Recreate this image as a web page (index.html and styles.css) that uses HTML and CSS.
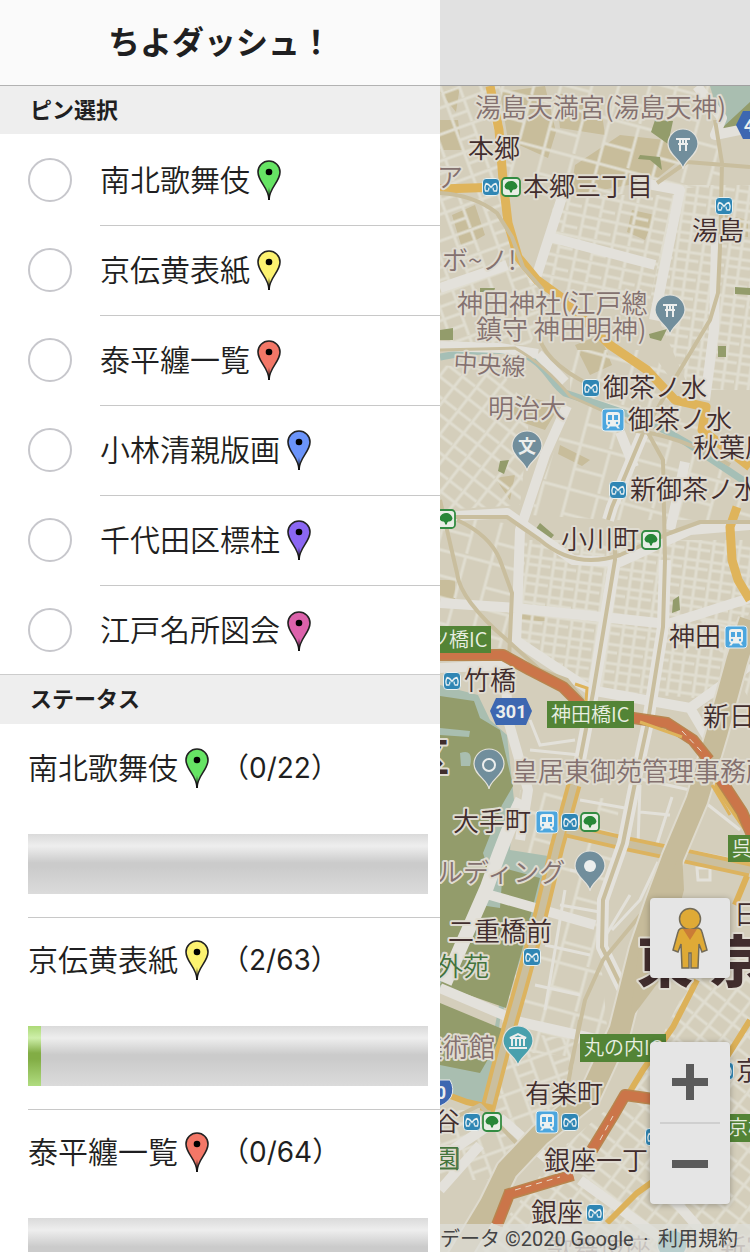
FILE: index.html
```html
<!DOCTYPE html>
<html lang="ja">
<head>
<meta charset="utf-8">
<meta name="viewport" content="width=device-width, initial-scale=1">
<title>ちよダッシュ！</title>
<link rel="stylesheet" href="styles.css">
</head>
<body>
<svg class="defs" aria-hidden="true">
  <symbol id="pin" viewBox="0 0 24 40">
    <path d="M12 39.500C11.500 27 1 22 1 12A11 11 0 0 1 23 12C23 22 12.500 27 12 39.500Z" fill="currentColor" stroke="#222" stroke-width="1.600"/>
    <path d="M12 27L11 40H13Z" fill="#111"/>
    <circle cx="12" cy="12" r="3.300" fill="#000"/>
  </symbol>
  <symbol id="metro" viewBox="0 0 18 18">
    <rect x=".5" y=".5" width="17" height="17" rx="3.500" fill="#2f86b4" stroke="#e9f0ef"/>
    <path d="M4.500 5Q2 8.500 3.500 13H6.500M13.500 5Q16 8.500 14.500 13H11.500M4 5.500Q7 6 9 9.500Q11 6 14 5.500M6.500 12.500L7 9.500M11.500 12.500L11 9.500" fill="none" stroke="#e8f0f2" stroke-width="1.300"/>
  </symbol>
  <symbol id="toei" viewBox="0 0 20 20">
    <rect x="1" y="1" width="18" height="18" rx="3.500" fill="#e8eee5" stroke="#338c42" stroke-width="1.800"/>
    <path d="M10 4C13 4 16 6 16.500 9.500Q15.500 13 12.500 12.500Q11 13 10.800 15.500H9.200Q9 13 7.500 12.500Q4.500 13 3.500 9.500C4 6 7 4 10 4Z" fill="#278737"/>
  </symbol>
  <symbol id="jr" viewBox="0 0 24 24">
    <rect x="1" y="1" width="22" height="22" rx="3" fill="#4ba6de" stroke="#e4eef2"/>
    <path d="M8 4H16Q19 4 19 7V15Q19 17 17 18L19 20.500H16.500L15 18.500H9L7.500 20.500H5L7 18Q5 17 5 15V7Q5 4 8 4Z" fill="#edf1f0"/>
    <path d="M7 7H11V12H7ZM13 7H17V12H13Z" fill="#4ba6de"/>
    <circle cx="8" cy="15" r="1.200" fill="#4ba6de"/><circle cx="16" cy="15" r="1.200" fill="#4ba6de"/>
  </symbol>
  <symbol id="place" viewBox="0 0 32 42">
    <path d="M16 41C15 32 1 27 1 16A15 15 0 0 1 31 16C31 27 17 32 16 41Z" fill="currentColor" stroke="#e4e2db" stroke-width="1.200"/>
  </symbol>
</svg>

<aside class="drawer">
  <header class="bar"><h1 class="bar-title">ちよダッシュ！</h1></header>
  <h2 class="section">ピン選択</h2>
  <ul class="list">
    <li class="choice"><input class="check" type="checkbox" id="p1"><label class="choice-label" for="p1">南北歌舞伎<svg class="pin green"><use href="#pin"/></svg></label></li>
    <li class="choice"><input class="check" type="checkbox" id="p2"><label class="choice-label" for="p2">京伝黄表紙<svg class="pin yellow"><use href="#pin"/></svg></label></li>
    <li class="choice"><input class="check" type="checkbox" id="p3"><label class="choice-label" for="p3">泰平纏一覧<svg class="pin red"><use href="#pin"/></svg></label></li>
    <li class="choice"><input class="check" type="checkbox" id="p4"><label class="choice-label" for="p4">小林清親版画<svg class="pin blue"><use href="#pin"/></svg></label></li>
    <li class="choice"><input class="check" type="checkbox" id="p5"><label class="choice-label" for="p5">千代田区標柱<svg class="pin purple"><use href="#pin"/></svg></label></li>
    <li class="choice"><input class="check" type="checkbox" id="p6"><label class="choice-label" for="p6">江戸名所図会<svg class="pin pink"><use href="#pin"/></svg></label></li>
  </ul>
  <h2 class="section section-ruled">ステータス</h2>
  <ul class="list">
    <li class="status"><p class="status-name">南北歌舞伎<svg class="pin green"><use href="#pin"/></svg><span class="count">（0/22）</span></p><div class="meter" role="progressbar" aria-label="南北歌舞伎" aria-valuemin="0" aria-valuemax="22" aria-valuenow="0"></div></li>
    <li class="status"><p class="status-name">京伝黄表紙<svg class="pin yellow"><use href="#pin"/></svg><span class="count">（2/63）</span></p><div class="meter" role="progressbar" aria-label="京伝黄表紙" aria-valuemin="0" aria-valuemax="63" aria-valuenow="2"><div class="meter-fill" style="width:3.200%"></div></div></li>
    <li class="status"><p class="status-name">泰平纏一覧<svg class="pin red"><use href="#pin"/></svg><span class="count">（0/64）</span></p><div class="meter" role="progressbar" aria-label="泰平纏一覧" aria-valuemin="0" aria-valuemax="64" aria-valuenow="0"></div></li>
  </ul>
</aside>

<main class="page">
  <div class="bar bar-dim"></div>
  <div class="map">
    <svg class="map-canvas" viewBox="440 86 310 1166" preserveAspectRatio="xMinYMin slice" role="img" aria-label="地図">
      <defs>
        <pattern id="g1" width="34" height="22" patternUnits="userSpaceOnUse" patternTransform="rotate(12)"><path d="M0 2H34M4 0V22M20 2V22M4 12H20M20 15H34" class="st"/></pattern>
        <pattern id="g2" width="26" height="19" patternUnits="userSpaceOnUse" patternTransform="rotate(8)"><path d="M0 2H26M3 0V19M15 0V19M3 10H26" class="st"/></pattern>
        <pattern id="g3" width="56" height="46" patternUnits="userSpaceOnUse" patternTransform="rotate(15)"><path d="M0 3H56M4 0V46M34 3V46M4 28H34" class="st"/></pattern>
        <pattern id="g4" width="30" height="18" patternUnits="userSpaceOnUse" patternTransform="rotate(-52)"><path d="M0 2H30M4 0V18M18 2V18" class="st"/></pattern>
        <pattern id="g5" width="38" height="25" patternUnits="userSpaceOnUse" patternTransform="rotate(-20)"><path d="M0 2H38M4 0V25M22 2V25M4 14H22" class="st"/></pattern>
      </defs>
      <path d="M440 86H750V1252H440Z" fill="#d4cebb"/>
      <g fill="#c8bd9b">
        <path d="M500 92L545 86L556 132L548 158L508 140ZM556 93L600 100L605 135L560 128ZM440 120H458L462 150H440ZM620 135L665 140L680 160L655 180L570 196L575 165ZM632 210L655 215L645 240L627 232ZM452 215L475 205L485 235L462 248ZM440 92L460 86L456 112ZM575 345L600 335L612 365L590 375ZM560 445L590 460L582 466L558 454ZM520 395L560 405L545 430L510 418ZM495 478L515 475L510 500ZM440 580H455V600H440ZM520 612L545 612V621H520ZM725 215L748 220V237L724 236Z"/>
      </g>
      <path d="M440 86H500L510 240L550 300L530 345H440Z" fill="url(#g5)"/>
      <path d="M500 86H720V185L560 200L505 185Z" fill="url(#g3)"/>
      <path d="M556 195L675 195L650 300L560 290L535 280Z" fill="url(#g1)"/>
      <path d="M675 185H750V390H690L650 300Z" fill="url(#g2)"/>
      <path d="M440 365L500 370L530 410L520 505L440 510Z" fill="url(#g4)"/>
      <path d="M570 350H650L750 490V520H610L530 515L570 410Z" fill="url(#g3)"/>
      <path d="M440 515L520 525L515 650L440 640Z" fill="url(#g3)"/>
      <path d="M518 540H750V610L720 700L595 690L518 640Z" fill="url(#g2)"/>
      <path d="M700 620H750V700ZM520 790L620 800L600 950L610 1060L500 1050Z" fill="url(#g3)"/>
      <path d="M690 980L750 930V1252H480L560 1150L640 1080Z" fill="url(#g4)"/>
      <path d="M500 1030L580 1040L560 1120L490 1180H440V1110L490 1110Z" fill="url(#g5)"/>

      <!-- moats and parks -->
      <g fill="#a9beb0">
        <path d="M710 86H750V112L735 135L722 128Z"/>
        <path d="M440 685L478 695L490 720L507 735L514 800L510 850L548 856L540 900L500 1020L490 1110L440 1095V1040L490 1052L500 1000L475 900L440 990Z"/>
      </g>
      <path d="M440 357Q490 347 517 352C545 360 550 383 565 393L607 407Q650 420 687 443L750 485" class="river"/>
      <g fill="#939c6b">
        <path d="M440 696L474 701L480 718L500 730L513 786L502 805L483 853L493 885L478 910L440 975Z"/>
        <path d="M503 868L540 878L522 950L506 1008L440 985L480 905L500 908Z"/>
        <path d="M440 1003L505 1030L480 1073L440 1065Z"/>
        <path d="M655 120L673 121L668 144L651 132ZM640 155L660 157L662 170L650 160L638 159ZM440 330L453 328V340H440ZM649 334L667 329L661 341L650 338ZM718 346H726V357H718ZM500 461L509 460L504 474L498 471ZM540 523L554 535L549 541L535 530ZM673 600L679 596L680 610L672 613ZM480 288H495L494 292H480ZM735 287L750 288V295L735 294ZM722 128L750 102V126L725 133Z"/>
      </g>
      <path d="M440 728L470 731L469 737L440 735ZM460 753Q474 748 470 766L461 766Z" fill="#a9beb0"/>

      <!-- main streets -->
      <g class="road">
        <path d="M563 194L534 284M550 237L655 265M637 182L680 190L654 320M440 288L507 265M440 346L500 348L538 354M538 354L565 382M697 86L722 118L715 135L750 128M716 240L714 330L705 400"/>
        <path d="M567 406L545 455L520 530L516 645M440 603L516 608L668 624L750 598M620 432L634 467M515 640L590 690L690 708L750 665M690 708L712 745M685 462L670 530M440 668L505 665L508 720L528 790L520 840"/>
        <path d="M440 517L507 513L573 560L620 562L690 530L750 525"/>
        <path d="M522 800Q509 825 487 887L445 983" stroke-width="14"/>
        <path d="M490 895L595 925M440 988L520 1022L600 1040M440 1158L500 1118M500 1118L560 1170M440 1190L480 1145M580 1180L680 1252M550 1220L600 1252M665 1190L720 1252"/>
      </g>
      <path class="lane" d="M672 797L655 850M600 770L690 790M580 800L625 808M640 785L638 845M640 812L670 815M700 795L685 850L745 862M702 800L740 830M697 868H710V880H698ZM658 862L640 900L612 930M630 895L600 945M610 960L622 990L610 1060M570 870L595 875M560 905L600 912M545 945L590 955M535 985L580 995M565 890L545 1010M530 750L580 755M530 720L540 745L575 740"/>

      <!-- arterial roads -->
      <g class="amber">
        <path d="M490 86L499 130L503 180L508 223L518 257L537 280L562 298L610 345L647 370L675 400L706 407L702 430L750 467M440 189L502 187M737 507L730 527L732 560L738 580L750 600"/>
      </g>
      <g class="amber-case"><path d="M574 785L557 847L540 917L520 990L503 1050L487 1112M567 830L623 843L690 857L750 870"/></g>
      <g class="amber-core"><path d="M574 785L557 847L540 917L520 990L503 1050L487 1112M567 830L623 843L690 857L750 870"/></g>
      <path d="M440 1092L467 1102L493 1108M747 876L735 905M697 980L673 1027L643 1070L623 1103M700 1140L673 1167L637 1193L607 1223M712 780L747 830M750 1020L725 1060" fill="none" stroke="#dcb159" stroke-width="6"/>

      <!-- railways -->
      <g class="rail-case">
        <path d="M615 560L603 633L593 693L580 760M665 560L663 627L647 727L637 773L623 843L603 900L602 947L623 990L622 1030M643 433L612 507L608 520"/>
      </g>
      <g class="rail">
        <path d="M440 193Q474 195 497 213L512 237L523 267L543 290M657 183L687 162L750 167M715 120L722 163L720 247L718 293L710 320L680 370L643 433L612 507L608 520M648 433L663 460L665 560L663 627L647 727L637 773L623 843L603 900L602 947L623 990L622 1030M440 517L507 517L540 540Q575 570 620 555L670 533L700 522H750M440 500L457 573Q460 600 507 640L540 670L567 680L583 700M457 520Q490 535 500 560L512 593L509 660M615 540V560L603 633L593 693L580 760M538 330Q540 360 590 385M630 430Q680 435 730 465M657 895L603 960L585 1000L570 1070M580 1020L565 1100M440 1125L480 1105L525 1152"/>
      </g>
      <path d="M440 350L515 348Q545 365 570 396L645 430" fill="none" stroke="#c9be9e" stroke-width="3"/>
      <path class="trunk-case" d="M750 620L737 660L717 733L697 800L673 857L657 900L640 950L620 1030L590 1095L540 1135L507 1170L490 1205L457 1260"/>
      <path class="trunk" d="M750 620L737 660L717 733L697 800L673 857L657 900L640 950L620 1030L590 1095L540 1135L507 1170L490 1205L457 1260"/>
      <path d="M682 850L684 890L660 980L630 1020L640 940Z" fill="#c6bb9a"/>

      <!-- expressways -->
      <g class="express-case"><path d="M440 655L503 655L530 670L563 687L584 708M620 716L667 723L693 740L709 760M721 780L742 812L752 835M506 1195L573 1175M510 1192L497 1225M592 1150L614 1114L625 1095L660 1100"/></g>
      <g class="express"><path d="M440 655L503 655L530 670L563 687L584 708M620 716L667 723L693 740L709 760M721 780L742 812L752 835M506 1195L573 1175M510 1192L497 1225M592 1150L614 1114L625 1095L660 1100"/></g>
      <path d="M640 722L682 737M575 684L587 688L586 702M712 785L730 815" fill="none" stroke="#deb35a" stroke-width="3"/>
      <path d="M682 731L702 752M515 1190L560 1177M600 1140L613 1116" fill="none" stroke="#e9dccb" stroke-dasharray="6 5"/>

      <!-- station and place markers -->
      <g>
        <use href="#metro" x="482" y="178" width="18" height="18"/><use href="#toei" x="501" y="177" width="20" height="20"/>
        <use href="#metro" x="715" y="197" width="18" height="18"/>
        <use href="#metro" x="582" y="379" width="18" height="18"/><use href="#jr" x="601" y="408" width="24" height="24"/>
        <use href="#metro" x="609" y="481" width="18" height="18"/><use href="#toei" x="641" y="530" width="20" height="20"/>
        <use href="#toei" x="436" y="509" width="20" height="20"/><use href="#jr" x="724" y="625" width="24" height="24"/>
        <use href="#metro" x="443" y="672" width="18" height="18"/>
        <use href="#jr" x="535" y="810" width="24" height="24"/><use href="#metro" x="561" y="813" width="18" height="18"/><use href="#toei" x="580" y="812" width="20" height="20"/>
        <use href="#metro" x="523" y="948" width="18" height="18"/>
        <use href="#metro" x="463" y="1113" width="18" height="18"/><use href="#toei" x="482" y="1112" width="20" height="20"/>
        <use href="#jr" x="535" y="1110" width="24" height="24"/><use href="#metro" x="561" y="1113" width="18" height="18"/>
        <use href="#metro" x="586" y="1204" width="18" height="18"/><use href="#metro" x="645" y="1128" width="18" height="18"/><use href="#metro" x="716" y="1062" width="18" height="18"/>
      </g>
      <g color="#718e9c">
        <use href="#place" x="667" y="128" width="32" height="42"/><use href="#place" x="654" y="294" width="32" height="42"/>
        <use href="#place" x="511" y="430" width="32" height="42"/><use href="#place" x="473" y="748" width="32" height="42"/>
        <use href="#place" x="574" y="850" width="32" height="42"/>
      </g>
      <g color="#48a0ad"><use href="#place" x="502" y="1025" width="32" height="42"/><use href="#place" x="656" y="1229" width="32" height="42"/></g>
      <g fill="none" stroke="#eceeed" stroke-width="2">
        <path d="M676 139H690M678 144H688M680 139V151M686 139V151M683 139V144M663 305H677M665 310H675M667 305V317M673 305V317M670 305V310"/>
        <circle cx="489" cy="765" r="6"/>
        <path d="M510 1038L518 1034L526 1038ZM509 1048H527M512 1039V1046M516 1039V1046M520 1039V1046M524 1039V1046"/>
      </g>
      <circle cx="590" cy="866" r="6" fill="#eceeed"/>
      <text x="518" y="453" class="glyph">文</text>

      <!-- road signs -->
      <path d="M496 698H526L532 711L526 725H496L490 711Z" fill="#3d67b1"/><text x="511" y="718" class="shield">301</text>
      <path d="M743 111H760V139H743L736 125Z" fill="#3d67b1"/><text x="749" y="132" class="shield">4</text>
      <path d="M432 1080H450Q455 1089 451 1097Q446 1105 436 1107Z" fill="#3d67b1" stroke="#e6e8e8"/><text x="441" y="1099" class="shield">0</text>
      <g fill="#538436"><path d="M440 626H491V653H440ZM547 701H634V728H547ZM580 1034H666V1062H580ZM728 835H760V862H728ZM728 1114H760V1142H728Z"/></g>
      <g class="sign"><text x="429" y="647">ツ橋IC</text><text x="551" y="722">神田橋IC</text><text x="584" y="1055">丸の内IC</text><text x="732" y="856">呉</text><text x="728" y="1135">京橋</text></g>

      <g class="poi">
        <text x="475" y="117">湯島天満宮(湯島天神)</text><text x="437" y="187">ア</text><text x="442" y="270">ボ~ノ!</text>
        <text x="457" y="313">神田神社(江戸總</text><text x="476" y="339">鎮守 神田明神)</text>
        <text x="453" y="371" class="line" transform="rotate(4 453 371)">中央線</text>
        <text x="488" y="418">明治大</text><text x="512" y="781">皇居東御苑管理事務所</text><text x="437" y="882">ルディング</text>
        <text x="417" y="1057">美術館</text><text x="547" y="1258">歌舞伎座</text><text x="720" y="1258">新富</text>
      </g>
      <g class="station">
        <text x="468" y="158">本郷</text><text x="523" y="196">本郷三丁目</text><text x="692" y="240">湯島</text>
        <text x="603" y="397">御茶ノ水</text><text x="628" y="429">御茶ノ水</text><text x="693" y="457">秋葉原</text><text x="630" y="499">新御茶ノ水</text>
        <text x="561" y="549">小川町</text><text x="669" y="646">神田</text><text x="464" y="690">竹橋</text><text x="703" y="726">新日本橋</text>
        <text x="453" y="831">大手町</text><text x="448" y="941">二重橋前</text><text x="734" y="924">日</text>
        <text x="525" y="1103">有楽町</text><text x="434" y="1131">谷</text><text x="544" y="1170">銀座一丁目</text><text x="531" y="1222">銀座</text><text x="736" y="1080">京橋</text>
      </g>
      <g class="park"><text x="437" y="976">外苑</text><text x="434" y="1168">園</text></g>
      <path d="M440 1148H458V1169H440" fill="none" stroke="#44743d"/>
      <text x="409" y="772" class="ward">区</text>
      <text x="637" y="982" class="city">東</text><text x="710" y="982" class="city">京</text>
    </svg>

    <div class="controls">
      <button class="control" type="button" aria-label="ストリートビュー">
        <svg class="pegman" viewBox="0 0 36 62">
          <path d="M11 21H25Q29 21 30 25L35 43L30 45L27 37L26 61H19V46H17V61H10L9 37L6 45L1 43L6 25Q7 21 11 21Z" fill="#dfaa36" stroke="#736b58" stroke-width="1.500"/>
          <circle cx="18" cy="12" r="10.500" fill="#dfaa36" stroke="#736b58" stroke-width="1.500"/>
          <path d="M11 22H25L18 33Z" fill="#ca7c36"/>
        </svg>
      </button>
      <div class="zoom">
        <button class="control-zoom" type="button" aria-label="拡大"><svg class="sign-icon" viewBox="0 0 36 36"><path d="M14 0H22V14H36V22H22V36H14V22H0V14H14Z" fill="#5b5b5b"/></svg></button>
        <hr class="zoom-rule">
        <button class="control-zoom" type="button" aria-label="縮小"><svg class="sign-icon" viewBox="0 0 36 36"><path d="M0 14H36V22H0Z" fill="#5b5b5b"/></svg></button>
      </div>
    </div>
    <footer class="credits"><span>データ ©2020 Google</span><span>·</span><a class="terms" href="#terms">利用規約</a></footer>
  </div>
</main>
</body>
</html>
```
FILE: styles.css
```css
* { box-sizing: border-box; }

body {
  margin: 0;
  height: 100vh;
  display: flex;
  overflow: hidden;
  background: #fff;
  color: #1f1f21;
  font-family: Inter, "Noto Sans CJK JP", sans-serif;
  font-size: 30px;
}

.defs { position: absolute; width: 0; height: 0; }

.drawer {
  flex: 0 0 440px;
  height: 100vh;
  overflow: hidden;
  background: #fff;
}

.bar {
  height: 86px;
  display: flex;
  align-items: center;
  justify-content: center;
  background: #fafafa;
  border-bottom: 1px solid #b2b2b2;
}
.bar-dim { background: #e1e1e1; border-color: #a0a0a0; }
.bar-title { margin: 0; font-size: 32px; line-height: 48px; font-weight: 700; }

.section {
  margin: 0;
  padding: 0 30px;
  background: #eee;
  font-size: 22px;
  line-height: 48px;
  font-weight: 700;
}
.section-ruled { border-top: 1px solid #ccc; line-height: 49px; }

.list { list-style: none; margin: 0; padding: 0; font-weight: 350; }

.choice {
  display: flex;
  padding-left: 28px;
  gap: 28px;
}
.choice:first-child { padding-top: 2px; }
.check {
  appearance: none;
  flex: none;
  align-self: center;
  width: 44px;
  height: 44px;
  margin: 0 0 2px;
  border: 2px solid #c7c7cc;
  border-radius: 50%;
}
.choice:last-child .check { margin: 0; }
.check:checked { background: #0076ff; border-color: #0076ff; }
.choice-label {
  flex: 1;
  height: 90px;
  display: flex;
  align-items: center;
  border-bottom: 1px solid #c8c8c8;
  padding-bottom: 6px;
}
.choice:last-child .choice-label { height: 88px; border-bottom: 0; padding-bottom: 4px; }

.pin { flex: none; width: 24px; height: 40px; margin: 5px 8px 0 7px; }
.green { color: #66e464; }
.yellow { color: #fcf270; }
.red { color: #f37767; }
.blue { color: #6b94fa; }
.purple { color: #8b67f3; }
.pink { color: #dc62ab; }

.status {
  margin-left: 28px;
  padding: 20px 12px 23px 0;
  border-bottom: 1px solid #c8c8c8;
}
.status:first-child { padding-top: 22px; }
.status-name {
  height: 44px;
  margin: 0 0 44px;
  padding-bottom: 4px;
  display: flex;
  align-items: center;
}
.status-name .pin { margin-top: 3px; }
.count { margin-left: 4px; font-size: 28px; font-weight: 400; }

.meter {
  height: 60px;
  background: linear-gradient(#dadada, #eee 20%, #cbcbcb 48%, #cbcbcb 55%, #dbdbdb);
}
.meter-fill {
  height: 100%;
  background: linear-gradient(#acd977, #ceefaa 20%, #82ad45 45%, #82ad45 55%, #b0dc80);
}

.page { flex: 1; min-width: 0; display: flex; flex-direction: column; }
.map { position: relative; flex: 1; min-height: 0; overflow: hidden; }
.map-canvas {
  display: block;
  width: 100%;
  height: 100%;
  font-family: "Noto Sans CJK JP", sans-serif;
  font-weight: 350;
}

.st { fill: none; stroke: #e0ddd0; stroke-width: 3px; }
.lane { fill: none; stroke: #e3e1da; stroke-width: 3px; }
.road { fill: none; stroke: #e3e1db; stroke-width: 10px; stroke-linejoin: round; }
.river { fill: none; stroke: #a5bfb6; stroke-width: 7px; }
.amber { fill: none; stroke: #dfb45b; stroke-width: 9px; stroke-linejoin: round; }
.amber-case { fill: none; stroke: #dcb35f; stroke-width: 15px; }
.amber-core { fill: none; stroke: #cabf9f; stroke-width: 7px; }
.rail-case { fill: none; stroke: #e4e2dc; stroke-width: 12px; stroke-linejoin: round; }
.rail { fill: none; stroke: #c9be9e; stroke-width: 4px; stroke-linejoin: round; }
.trunk-case { fill: none; stroke: #dedacd; stroke-width: 25px; stroke-linejoin: round; }
.trunk { fill: none; stroke: #c6bb9a; stroke-width: 21px; stroke-linejoin: round; }
.express-case { fill: none; stroke: #b9854e; stroke-width: 12px; stroke-linejoin: round; }
.express { fill: none; stroke: #cb7549; stroke-width: 9px; stroke-linejoin: round; }

.poi, .station, .park, .ward, .city {
  paint-order: stroke;
  stroke: #dfdbd0;
  stroke-width: 4px;
  stroke-linejoin: round;
  font-size: 26px;
}
.poi { fill: #84716f; }
.station { fill: #412d2d; }
.park { fill: #44743d; }
.line { font-size: 24px; }
.ward { font-size: 40px; font-weight: 700; fill: #412d2d; }
.city { font-size: 56px; font-weight: 900; fill: #412d2d; }
.sign { fill: #e8efe2; font-size: 20px; }
.glyph { fill: #eceeed; font-size: 18px; font-weight: 700; }
.shield { fill: #eceeed; font-family: Roboto, sans-serif; font-size: 18px; font-weight: 700; text-anchor: middle; }

.controls {
  position: absolute;
  right: 20px;
  bottom: 48px;
  display: flex;
  flex-direction: column;
  gap: 64px;
}
.control, .zoom {
  width: 80px;
  border: 0;
  border-radius: 4px;
  background: #e5e5e5;
  box-shadow: 0 1px 6px rgba(0, 0, 0, .3);
}
.control { height: 80px; display: grid; place-items: center; padding: 0; }
.pegman { width: 36px; height: 62px; }
.control-zoom {
  width: 80px;
  height: 80px;
  padding: 0;
  border: 0;
  background: none;
  display: grid;
  place-items: center;
}
.sign-icon { width: 36px; height: 36px; }
.zoom-rule { margin: 0 10px; border: 0; height: 2px; background: #cfcfcf; }

.credits {
  position: absolute;
  left: 0;
  right: 0;
  bottom: 0;
  height: 28px;
  padding: 0 12px 0 0;
  display: flex;
  justify-content: space-between;
  background: rgba(222, 221, 216, .75);
  color: #444;
  font-family: Roboto, "Noto Sans CJK JP", sans-serif;
  font-size: 20px;
  line-height: 30px;
  white-space: nowrap;
}
.terms { color: inherit; text-decoration: none; }
```
